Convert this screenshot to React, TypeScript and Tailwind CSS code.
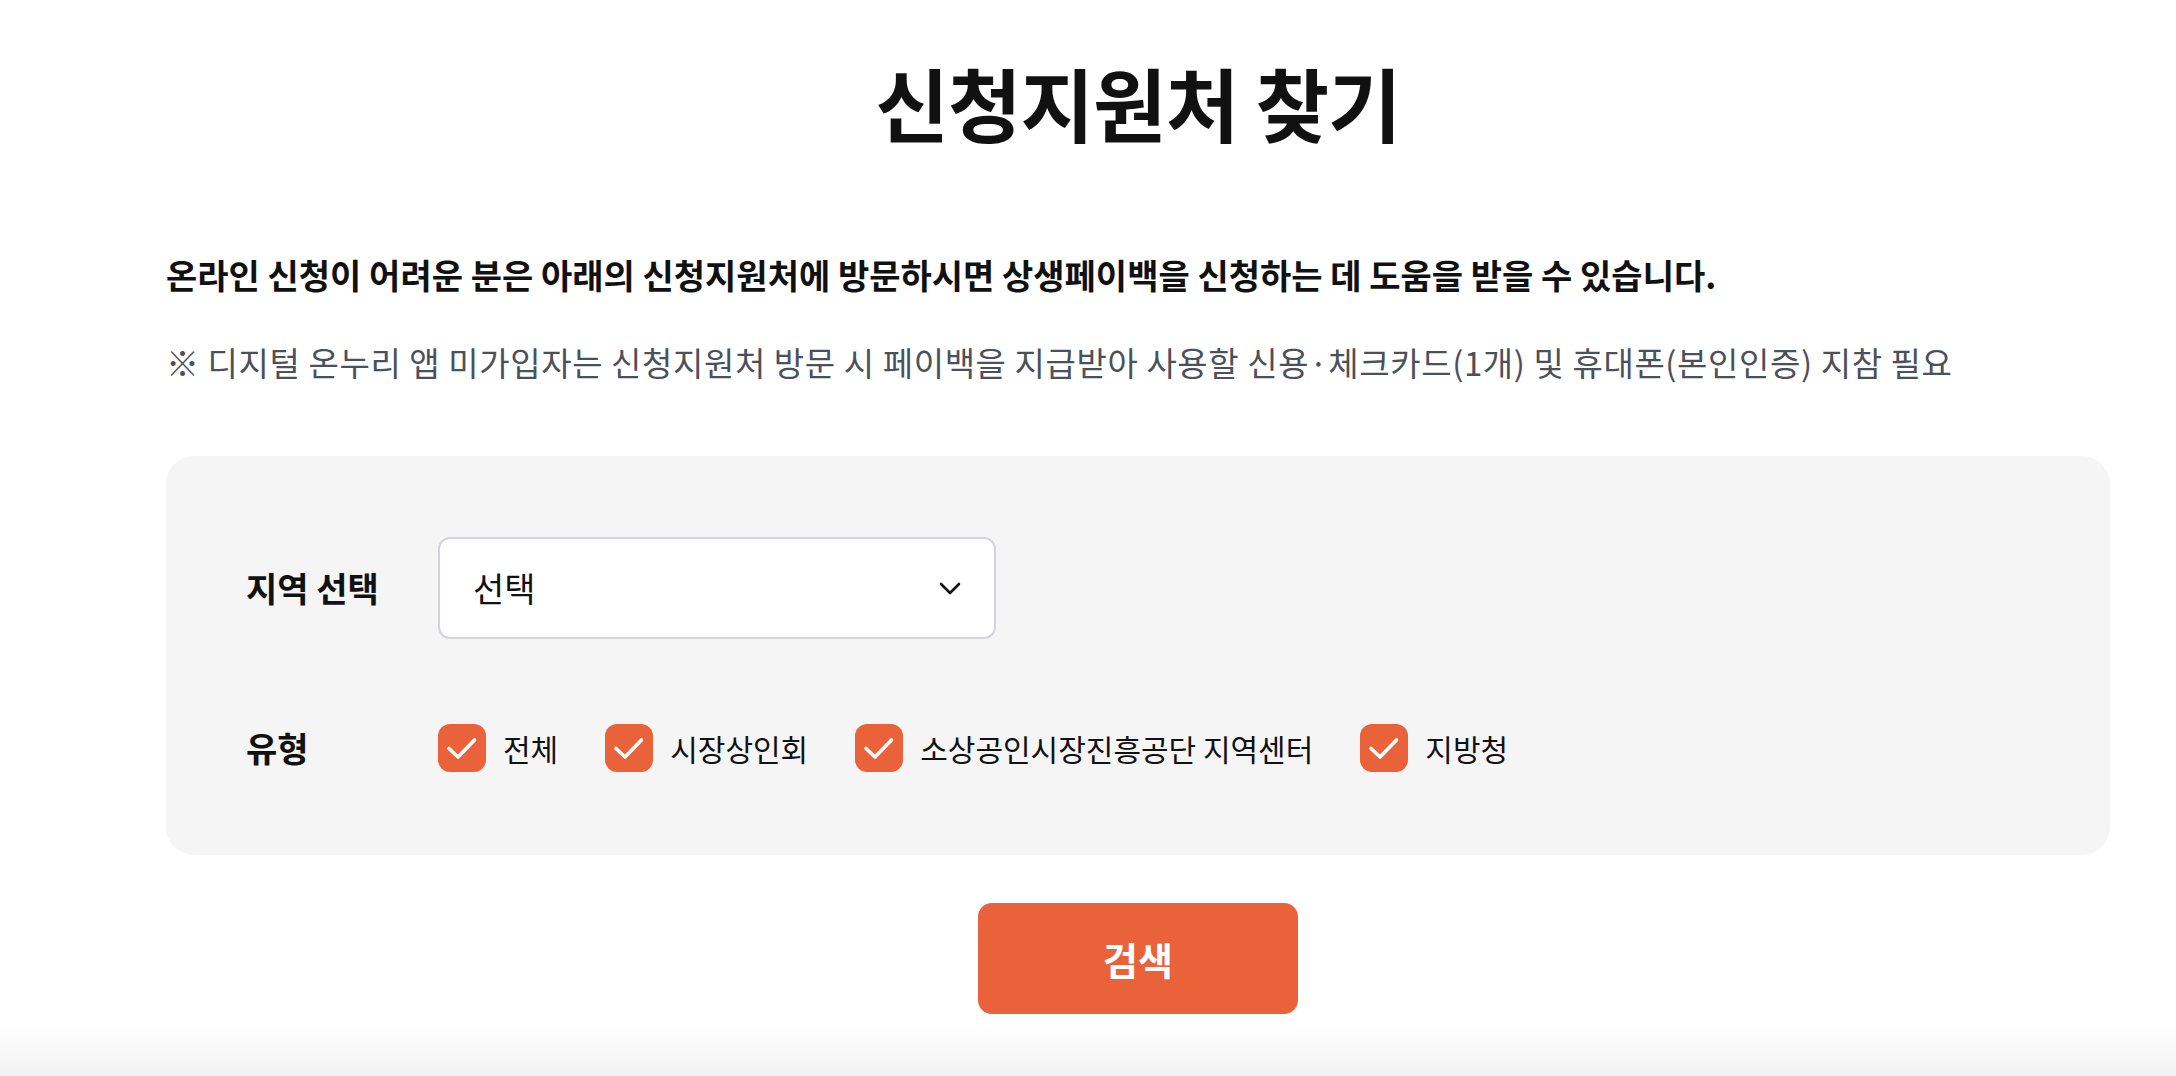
import React from "react";

const options = ["전체", "시장상인회", "소상공인시장진흥공단 지역센터", "지방청"];

function CheckBox() {
  return (
    <span className="flex h-12 w-12 shrink-0 items-center justify-center rounded-[12px] bg-[#e9623a]">
      <svg width="48" height="48" viewBox="0 0 48 48" fill="none">
        <path d="M11 24.5 L20 33 L36.5 16" stroke="#ffffff" strokeWidth="3.6" strokeLinecap="round" strokeLinejoin="round" />
      </svg>
    </span>
  );
}

export default function App() {
  return (
    <div className="flex min-h-screen flex-col bg-white font-['Noto_Sans_CJK_KR','Noto_Sans',sans-serif] text-[#111111]">
      <div className="flex flex-col pl-[166px] pr-[66px]">
        <h1 className="mt-[61px] text-center text-[80px] font-bold leading-none tracking-[-1px]">신청지원처 찾기</h1>

        <p className="mt-[117px] text-[34px] font-bold leading-none tracking-[0px]">
          온라인 신청이 어려운 분은 아래의 신청지원처에 방문하시면 상생페이백을 신청하는 데 도움을 받을 수 있습니다.
        </p>
        <p className="mt-[54px] text-[33px] leading-none tracking-[0.6px] text-[#4b515b]">
          ※ 디지털 온누리 앱 미가입자는 신청지원처 방문 시 페이백을 지급받아 사용할 신용·체크카드(1개) 및 휴대폰(본인인증) 지참 필요
        </p>

        <div className="mt-[77px] flex flex-col gap-[85px] rounded-[28px] bg-[#f5f5f5] pb-[83px] pl-[80px] pt-[81px]">
          <div className="flex items-center">
            <span className="w-[192px] text-[34px] font-bold leading-none">지역 선택</span>
            <div className="flex h-[102px] w-[558px] items-center justify-between rounded-[12px] border-2 border-[#d3d5da] bg-white pl-[33px] pr-[33px]">
              <span className="text-[34px] leading-none">선택</span>
              <svg width="22" height="13" viewBox="0 0 22 13" fill="none">
                <path d="M2 2 L11 11 L20 2" stroke="#111111" strokeWidth="2.6" strokeLinecap="round" strokeLinejoin="round" />
              </svg>
            </div>
          </div>
          <div className="flex items-center">
            <span className="w-[192px] text-[34px] font-bold leading-none">유형</span>
            <div className="flex items-center gap-[47px]">
              {options.map((o) => (
                <label key={o} className="flex items-center gap-[17px]">
                  <CheckBox />
                  <span className="text-[30px] leading-none">{o}</span>
                </label>
              ))}
            </div>
          </div>
        </div>

        <div className="mt-[48px] flex justify-center">
          <button className="flex h-[111px] w-[320px] items-center justify-center rounded-[14px] bg-[#e9623a] text-[38px] font-bold text-white">
            검색
          </button>
        </div>
      </div>
      <div className="mt-auto h-[50px] bg-gradient-to-b from-white to-[#f1f1f1]" />
    </div>
  );
}
